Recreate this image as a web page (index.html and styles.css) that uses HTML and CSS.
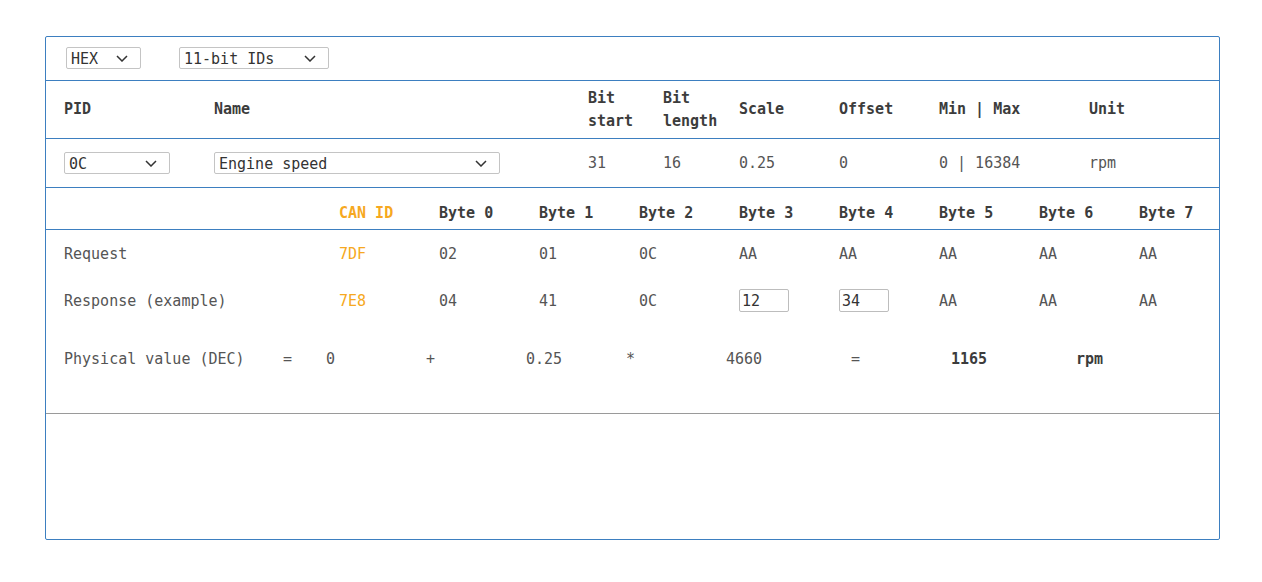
FILE: index.html
```html
<!DOCTYPE html>
<html>
<head>
<meta charset="utf-8">
<link rel="stylesheet" href="styles.css">
</head>
<body>
<div class="panel">
  <div class="toolbar">
    <div class="sel sel-hex"><span>HEX</span><svg class="chev" width="12" height="7" viewBox="0 0 12 7"><path d="M1 1l5 5 5-5" fill="none" stroke="#333" stroke-width="1.5"/></svg></div>
    <div class="sel sel-ids"><span>11-bit IDs</span><svg class="chev" width="12" height="7" viewBox="0 0 12 7"><path d="M1 1l5 5 5-5" fill="none" stroke="#333" stroke-width="1.5"/></svg></div>
  </div>

  <div class="pid-grid pid-head">
    <div class="c">PID</div>
    <div class="c">Name</div>
    <div class="c">Bit<br>start</div>
    <div class="c">Bit<br>length</div>
    <div class="c">Scale</div>
    <div class="c">Offset</div>
    <div class="c">Min | Max</div>
    <div class="c">Unit</div>
  </div>

  <div class="pid-grid pid-row">
    <div class="c"><div class="sel sel-pid"><span>0C</span><svg class="chev" width="12" height="7" viewBox="0 0 12 7"><path d="M1 1l5 5 5-5" fill="none" stroke="#333" stroke-width="1.5"/></svg></div></div>
    <div class="c"><div class="sel sel-name"><span>Engine speed</span><svg class="chev" width="12" height="7" viewBox="0 0 12 7"><path d="M1 1l5 5 5-5" fill="none" stroke="#333" stroke-width="1.5"/></svg></div></div>
    <div class="c">31</div>
    <div class="c">16</div>
    <div class="c">0.25</div>
    <div class="c">0</div>
    <div class="c">0 | 16384</div>
    <div class="c">rpm</div>
  </div>

  <div class="frames">
    <div class="byte-grid byte-head">
      <div class="c"></div>
      <div class="c can">CAN ID</div>
      <div class="c">Byte 0</div>
      <div class="c">Byte 1</div>
      <div class="c">Byte 2</div>
      <div class="c">Byte 3</div>
      <div class="c">Byte 4</div>
      <div class="c">Byte 5</div>
      <div class="c">Byte 6</div>
      <div class="c">Byte 7</div>
    </div>
    <div class="byte-grid byte-row">
      <div class="c">Request</div>
      <div class="c can">7DF</div>
      <div class="c">02</div>
      <div class="c">01</div>
      <div class="c">0C</div>
      <div class="c">AA</div>
      <div class="c">AA</div>
      <div class="c">AA</div>
      <div class="c">AA</div>
      <div class="c">AA</div>
    </div>
    <div class="byte-grid byte-row">
      <div class="c">Response (example)</div>
      <div class="c can">7E8</div>
      <div class="c">04</div>
      <div class="c">41</div>
      <div class="c">0C</div>
      <div class="c"><input class="byte-in" value="12"></div>
      <div class="c"><input class="byte-in" value="34"></div>
      <div class="c">AA</div>
      <div class="c">AA</div>
      <div class="c">AA</div>
    </div>
    <div class="phys">
      <div class="c">Physical value (DEC)</div>
      <div class="c">=</div>
      <div class="c">0</div>
      <div class="c">+</div>
      <div class="c">0.25</div>
      <div class="c">*</div>
      <div class="c">4660</div>
      <div class="c">=</div>
      <div class="c b">1165</div>
      <div class="c b">rpm</div>
    </div>
  </div>
</div>
</body>
</html>
```

FILE: styles.css
```css
html, body {
  margin: 0;
  padding: 0;
  background: #ffffff;
}
body {
  font-family: "DejaVu Sans Mono", "Liberation Mono", monospace;
  font-size: 15px;
  color: #555;
  padding: 36px 0 0 45px;
}
.panel {
  width: 1173px;
  height: 502px;
  border: 1px solid #3d7fc0;
  border-radius: 2px;
  background: #fff;
}
.toolbar {
  border-bottom: 1px solid #3d7fc0;
  display: flex;
  align-items: flex-start;
  padding: 10px 0 0 20px;
  box-sizing: border-box;
  height: 44px;
  gap: 38px;
}
.sel {
  height: 22px;
  box-sizing: border-box;
  border: 1px solid #c4c4c4;
  border-radius: 2px;
  display: flex;
  align-items: center;
  justify-content: space-between;
  padding: 1px 12px 0 4px;
  color: #333;
  background: #fff;
}
.sel span { line-height: 20px; }
.chev { display: block; }
.sel-hex { width: 75px; }
.sel-ids { width: 150px; }
.sel-pid { width: 106px; }
.sel-name { width: 286px; }

.pid-grid {
  display: grid;
  grid-template-columns: 150px 374px 75px 76px 100px 100px 150px 1fr;
  border-bottom: 1px solid #3d7fc0;
}
.c {
  padding-left: 18px;
  display: flex;
  align-items: center;
  white-space: nowrap;
}
.pid-head {
  height: 58px;
  box-sizing: border-box;
  font-weight: bold;
  color: #3c3c3c;
  line-height: 23px;
}
.pid-head .c { white-space: normal; }
.pid-row {
  height: 49px;
  box-sizing: border-box;
}

.byte-grid {
  display: grid;
  grid-template-columns: 275px repeat(9, 100px);
}
.byte-head {
  height: 42px;
  box-sizing: border-box;
  border-bottom: 1px solid #3d7fc0;
  font-weight: bold;
  color: #3c3c3c;
  padding-top: 9px;
}
.can { color: #f6a821; }
.byte-row {
  height: 47px;
}
.byte-in {
  width: 50px;
  height: 23px;
  box-sizing: border-box;
  border: 1px solid #bdbdbd;
  border-radius: 2px;
  font-family: "DejaVu Sans Mono", "Liberation Mono", monospace;
  font-size: 15px;
  color: #333;
  padding: 0 2px;
  margin: 0;
  outline: none;
}
.phys {
  display: grid;
  grid-template-columns: 219px 43px 100px 100px 100px 100px 125px 100px 125px 1fr;
  height: 90px;
  box-sizing: border-box;
  border-bottom: 1px solid #9a9a9a;
  align-items: start;
}
.phys .c {
  height: 70px;
}
.b {
  font-weight: bold;
  color: #3c3c3c;
}
```
